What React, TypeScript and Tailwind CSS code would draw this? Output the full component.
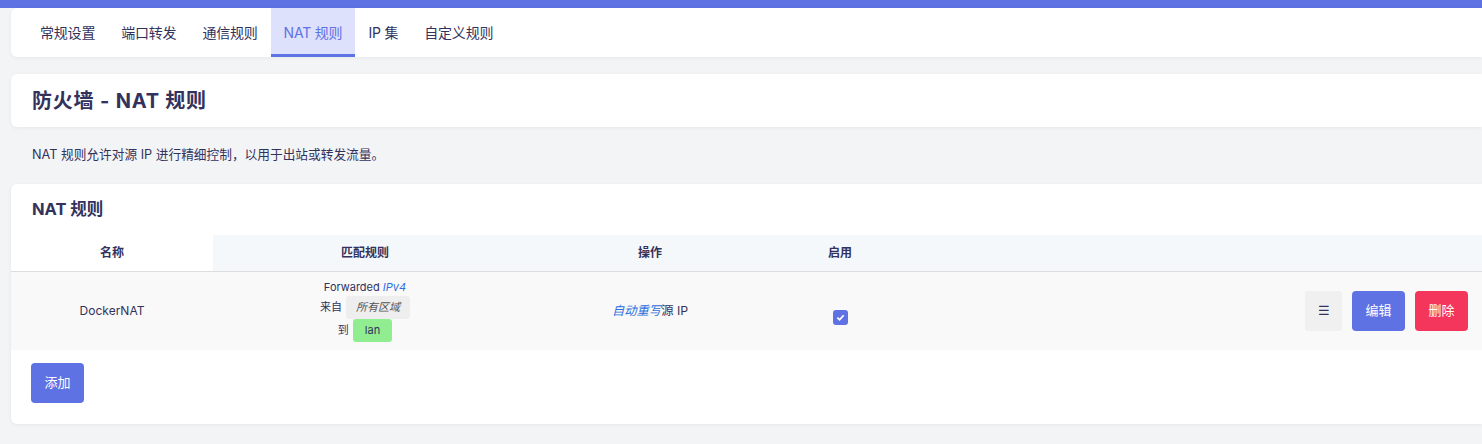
const font = { fontFamily: 'Inter, "Noto Sans CJK SC", sans-serif' };

const tabs = ["常规设置", "端口转发", "通信规则", "NAT 规则", "IP 集", "自定义规则"];

function RuleMatch() {
  return (
    <div className="flex flex-col items-center text-[11px] leading-[23px]">
      <div className="leading-[13px] mb-[2px]">
        Forwarded <em className="text-[#2f6fdc]">IPv4</em>
      </div>
      <div className="flex items-center">
        <span className="mr-[4px]">来自</span>
        <span className="bg-[#eeeeee] rounded-[3px] px-[10px] italic text-[#555]">所有区域</span>
      </div>
      <div className="flex items-center">
        <span className="mr-[4px]">到</span>
        <span className="bg-[#90ee90] rounded-[3px] px-[12px]">lan</span>
      </div>
    </div>
  );
}

export default function App() {
  return (
    <div className="min-h-[444px] bg-[#f3f4f6] text-[#32325d]" style={font}>
      <div className="h-[8px] bg-[#5e72e4]" />
      <div className="pl-[11px]">
        {/* tab bar */}
        <div className="bg-white rounded-l-[6px] h-[49px] flex pl-[16px] shadow-[0_1px_4px_rgba(0,0,0,0.05)]">
          {tabs.map((t) => (
            <div
              key={t}
              className={
                "px-[13px] flex items-center text-[14px] tracking-[-0.2px] border-b-[3px] " +
                (t === "NAT 规则"
                  ? "bg-[#dee1fb] text-[#5e72e4] border-[#5e72e4]"
                  : "border-transparent")
              }
            >
              <span className="pt-[2px]">{t}</span>
            </div>
          ))}
        </div>

        <div className="mt-[17px] bg-white rounded-l-[6px] h-[53px] flex items-center pl-[21px] shadow-[0_1px_4px_rgba(0,0,0,0.05)]">
          <h1 className="text-[20px] font-bold tracking-[0.8px]">防火墙 - NAT 规则</h1>
        </div>

        <p className="text-[12.7px] pl-[21px] pt-[18px] pb-[20px]">
          NAT 规则允许对源 IP 进行精细控制，以用于出站或转发流量。
        </p>

        {/* rules card */}
        <div className="bg-white rounded-l-[6px] h-[240px] shadow-[0_1px_4px_rgba(0,0,0,0.06)]">
          <h2 className="text-[16.5px] font-bold pl-[21px] pt-[13px] h-[51px]">NAT 规则</h2>
          <div className="text-[12px]">
            <div className="flex h-[37px] font-bold border-b border-[#dddddd]">
              <div className="w-[202px] flex items-center justify-center bg-white">名称</div>
              <div className="flex-1 flex bg-[#f5f8fb]">
                <div className="w-[304px] flex items-center justify-center">匹配规则</div>
                <div className="w-[266px] flex items-center justify-center">操作</div>
                <div className="w-[114px] flex items-center justify-center">启用</div>
                <div className="flex-1" />
              </div>
            </div>
            <div className="flex h-[78px] bg-[#f9f9f9] items-center">
              <div className="w-[202px] flex justify-center">DockerNAT</div>
              <div className="w-[304px] flex justify-center">
                <RuleMatch />
              </div>
              <div className="w-[266px] flex justify-center text-[12.3px]">
                <span>
                  <em className="text-[#2f6fdc]">自动重写</em>源 IP
                </span>
              </div>
              <div className="w-[114px] flex justify-center pt-[12px]">
                <span className="w-[15px] h-[15px] rounded-[3px] bg-[#5e72e4] flex items-center justify-center">
                  <svg width="9" height="9" viewBox="0 0 10 10">
                    <path d="M1.5 5.2 L4 7.5 L8.5 2.5" stroke="white" strokeWidth="2" fill="none" />
                  </svg>
                </span>
              </div>
              <div className="flex-1 flex justify-end gap-[10px] pr-[14px]">
                <button className="w-[37px] h-[40px] bg-[#f0f0f0] rounded-[3px] text-[13px]">☰</button>
                <button className="w-[53px] h-[40px] bg-[#5e72e4] rounded-[4px] text-white text-[13px]">编辑</button>
                <button className="w-[53px] h-[40px] bg-[#f5365c] rounded-[4px] text-white text-[13px]">删除</button>
              </div>
            </div>
            <div className="pl-[20px] pt-[13px]">
              <button className="w-[53px] h-[40px] bg-[#5e72e4] rounded-[4px] text-white text-[13px]">添加</button>
            </div>
          </div>
        </div>
      </div>
    </div>
  );
}
